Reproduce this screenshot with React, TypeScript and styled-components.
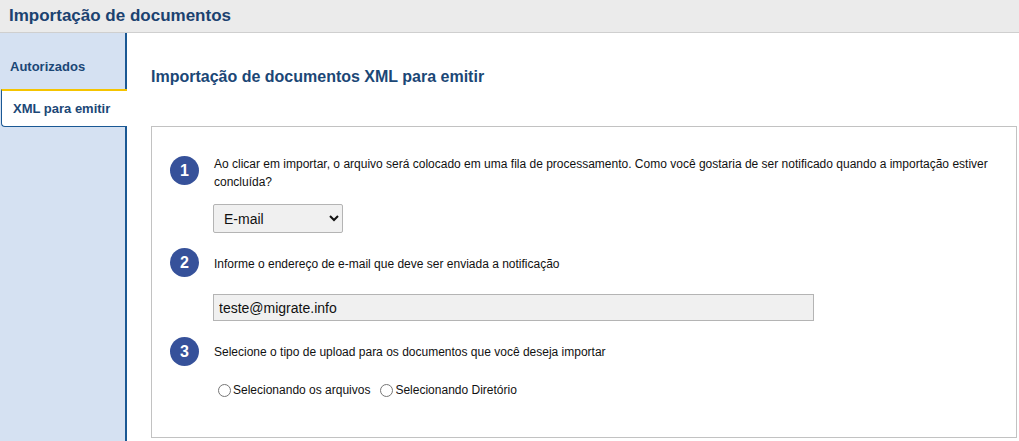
import React from 'react';
import styled, { createGlobalStyle } from 'styled-components';

const GlobalStyle = createGlobalStyle`
  html, body {
    margin: 0;
    padding: 0;
    background: #ffffff;
    font-family: "Liberation Sans", Arial, sans-serif;
  }
`;

const Page = styled.div`
  display: flex;
  flex-direction: column;
  height: 441px;
  overflow: hidden;
`;

const Header = styled.header`
  height: 32px;
  background: #ebebeb;
  border-bottom: 1px solid #cfcfcf;
  display: flex;
  align-items: center;
  padding-left: 9px;
  flex-shrink: 0;
`;

const HeaderTitle = styled.h1`
  margin: 0;
  font-size: 17px;
  font-weight: bold;
  color: #1b4270;
`;

const Body = styled.div`
  display: flex;
  flex: 1;
  min-height: 0;
`;

const Sidebar = styled.nav`
  width: 125px;
  background: #d5e1f2;
  border-right: 2px solid #1a5894;
  display: flex;
  flex-direction: column;
  flex-shrink: 0;
`;

const Tab = styled.div<{ $active?: boolean }>`
  font-size: 13px;
  font-weight: bold;
  color: #1b4776;
  ${p =>
    p.$active
      ? `
    height: 35px;
    display: flex;
    align-items: center;
    padding-left: 11px;
    margin: 0 -2px 0 1px;
    background: #ffffff;
    border-top: 2px solid #f5c400;
    border-left: 1px solid #1a5894;
    border-bottom: 1px solid #1a5894;
    border-bottom-left-radius: 4px;
    position: relative;
    z-index: 1;
  `
      : `
    height: 56px;
    box-sizing: border-box;
    padding: 26px 10px 0 10px;
  `}
`;

const Main = styled.main`
  flex: 1;
  display: flex;
  flex-direction: column;
  padding: 0 2px 3px 24px;
  min-width: 0;
`;

const PageTitle = styled.h2`
  margin: 35px 0 0 0;
  height: 58px;
  font-size: 16px;
  font-weight: bold;
  color: #1b4776;
`;

const Panel = styled.section`
  flex: 1;
  border: 1px solid #c2c2c2;
  padding: 28px 18px 0 18px;
  display: flex;
  flex-direction: column;
`;

const Step = styled.div`
  display: flex;
  gap: 15px;
  align-items: flex-start;
`;

const StepNumber = styled.div`
  width: 29px;
  height: 29px;
  border-radius: 50%;
  background: #36519a;
  color: #ffffff;
  font-size: 16px;
  font-weight: bold;
  display: flex;
  align-items: center;
  justify-content: center;
  flex-shrink: 0;
  margin-top: 1px;
`;

const StepBody = styled.div`
  display: flex;
  flex-direction: column;
  flex: 1;
`;

const StepText = styled.p<{ $top?: number }>`
  margin: ${p => p.$top ?? 0}px 0 0 0;
  font-size: 12px;
  line-height: 18px;
  color: #111111;
`;

const Select = styled.select`
  margin: 13px 0 14px -1px;
  width: 130px;
  height: 29px;
  background: #f0f0f0;
  border: 1px solid #b4b4b4;
  border-radius: 2px;
  font-family: "Liberation Sans", Arial, sans-serif;
  font-size: 14px;
  color: #111111;
  padding: 0 6px;
`;

const TextInput = styled.input`
  margin: 21px 0 15px -1px;
  width: 601px;
  height: 27px;
  box-sizing: border-box;
  background: #f0f0f0;
  border: 1px solid #b4b4b4;
  font-family: "Liberation Sans", Arial, sans-serif;
  font-size: 14px;
  color: #111111;
  padding: 0 5px;
  outline: none;
`;

const RadioRow = styled.div`
  margin-top: 22px;
  display: flex;
  align-items: center;
  gap: 6px;
`;

const RadioLabel = styled.label`
  display: flex;
  align-items: center;
  font-size: 12px;
  color: #111111;
`;

const Radio = styled.input`
  margin: 0 2px 0 4px;
  width: 13px;
  height: 13px;
`;

export default function App() {
  return (
    <Page>
      <GlobalStyle />
      <Header>
        <HeaderTitle>Importação de documentos</HeaderTitle>
      </Header>
      <Body>
        <Sidebar>
          <Tab>Autorizados</Tab>
          <Tab $active>XML para emitir</Tab>
        </Sidebar>
        <Main>
          <PageTitle>Importação de documentos XML para emitir</PageTitle>
          <Panel>
            <Step>
              <StepNumber>1</StepNumber>
              <StepBody>
                <StepText>
                  Ao clicar em importar, o arquivo será colocado em uma fila de processamento. Como você gostaria
                  de ser notificado quando a importação estiver concluída?
                </StepText>
                <div>
                  <Select defaultValue="email">
                    <option value="email">E-mail</option>
                  </Select>
                </div>
              </StepBody>
            </Step>
            <Step>
              <StepNumber>2</StepNumber>
              <StepBody>
                <StepText $top={8}>Informe o endereço de e-mail que deve ser enviada a notificação</StepText>
                <TextInput type="text" defaultValue="teste@migrate.info" readOnly />
              </StepBody>
            </Step>
            <Step>
              <StepNumber>3</StepNumber>
              <StepBody>
                <StepText $top={7}>Selecione o tipo de upload para os documentos que você deseja importar</StepText>
                <RadioRow>
                  <RadioLabel>
                    <Radio type="radio" name="upload" />
                    Selecionando os arquivos
                  </RadioLabel>
                  <RadioLabel>
                    <Radio type="radio" name="upload" />
                    Selecionando Diretório
                  </RadioLabel>
                </RadioRow>
              </StepBody>
            </Step>
          </Panel>
        </Main>
      </Body>
    </Page>
  );
}
